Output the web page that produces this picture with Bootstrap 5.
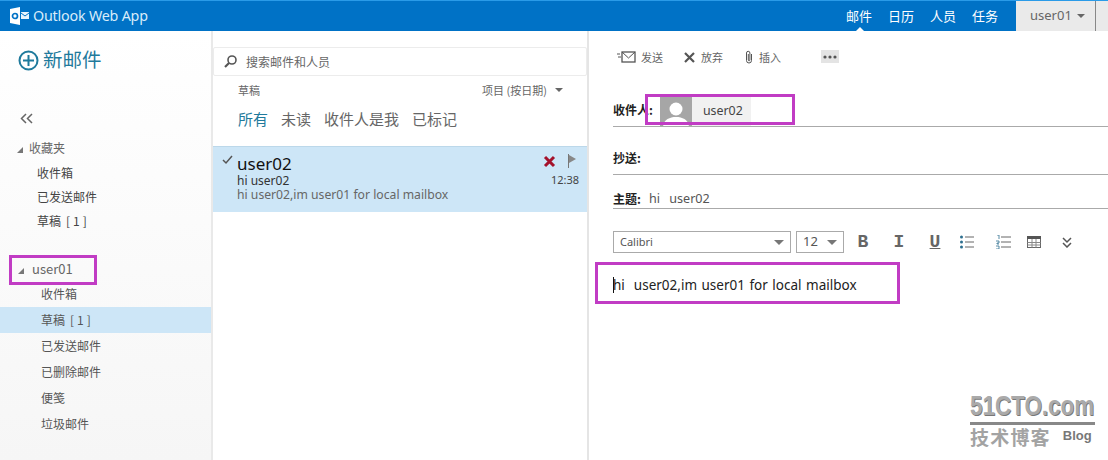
<!DOCTYPE html>
<html lang="zh"><head><meta charset="utf-8"><title>Outlook Web App</title>
<link href="https://cdn.jsdelivr.net/npm/bootstrap@5.3.0/dist/css/bootstrap.min.css" rel="stylesheet">
<style>
html,body{height:460px;overflow:hidden;background:#fff}
body{font-family:"Noto Sans","Noto Sans CJK SC",sans-serif;font-size:12px;color:#555;position:relative}
.cj{font-family:"Noto Sans CJK SC","Noto Sans",sans-serif}
.topbar{height:31px;background:#0072c6;border-top:1px solid #2a9be8;color:#fff}
.logo{margin-left:10px;flex:none}
.brand-txt{font-size:14.3px;color:#d8ecfa;margin-left:4px;letter-spacing:-.2px}
.tnav{gap:16px;font-size:13px;margin-right:18px;color:#fff;position:relative}
.tnav span{position:relative}
.tnav .on::after{content:"";position:absolute;left:9px;bottom:-6px;border:5px solid transparent;border-top:0;border-bottom-color:#fff}
.ubox{width:80px;height:30px;background:#eaeaea;color:#666;font-size:13px;padding-left:14px;border-right:1px solid #888}
.caret{display:inline-block;border:4px solid transparent;border-top-color:currentColor;border-bottom:0;margin-left:5px;vertical-align:middle}
.ustub{width:12px;background:#eaeaea;height:30px}
.shell{height:429px}
.leftp{width:213px;background:linear-gradient(#fff,#f6f6f6);flex:none;border-right:2px solid #e9e9e9}
.newm{color:#1f7a9c;font-size:19.500px;padding:3px 0 0 18px;height:56px}
.newm span{margin-top:-4px}
.coll{padding-left:20px;margin-top:24px;height:16px;line-height:12px}
.fold{font-size:12px;color:#666;height:24px;line-height:24px}
.fold1{margin-top:9px}
.fold2{margin-top:24px;font-size:13px}
.tri{display:inline-block;border-style:solid;border-width:0 0 6px 6px;border-color:transparent transparent #777 transparent;margin:0 6px 0 17px}
.fold2 .tri{margin:0 8px 0 18px}
.sub{padding-left:37px;height:24px;line-height:24px;color:#444;font-size:12px}
.sub1st{margin-top:1px}
.sub2{padding-left:41px;height:26px;line-height:26px;color:#555;font-size:12px}
.sub2.act{background:#cde6f7}
.brk{letter-spacing:3px;margin-left:5px}
.mid{width:376px;flex:none;border-right:2px solid #e5e5e5}
.search{width:374px;height:29px;margin-top:16px;border:1px solid #ececec;border-radius:2px;padding-left:9px;color:#666;font-size:12px;gap:8px}
.mhead{height:20px;padding:0 24px 0 25px;font-size:11px;color:#666;margin-top:4px;line-height:20px}
.filters{gap:13px;font-size:15px;padding-left:25px;color:#666;margin-top:1px;height:36px}
.filters .on{color:#1f7a9c}
.msg{height:66px;background:#cde6f7;margin-top:9px;position:relative;padding:7px 8px 0 24px;border-top:1px solid #bcd8ea;font-family:"Noto Sans",sans-serif}
.msg .nm{font-size:17px;line-height:20px;color:#111}
.msg .sj{font-size:12px;line-height:13px;color:#333}
.msg .pv{font-size:12.200px;line-height:16px;color:#666}
.chk{position:absolute;left:9px;top:7px}
.acts{position:absolute;right:8px;top:7px;text-align:right;line-height:1}
.acts-row{gap:11px;margin-right:2px}
.tm{color:#444;font-size:11px;margin-top:6px}
.right{flex:1;padding-left:24px}
.cmd{height:54px;padding-top:16px;font-size:11px;color:#666;align-items:flex-start}
.cmd>span{display:flex;align-items:center;height:20px}
.c1{margin-left:4px;gap:5px}
.c2{margin-left:21px;gap:6px}
.c3{margin-left:21px;gap:5px}
.cmd>.dots{background:#e4e4e4;width:18px;height:13px;margin-left:40px;margin-top:3px;justify-content:center}
.field{border-bottom:1px solid #aaa;font-weight:700;color:#222;font-size:12px}
.f1{height:42px;padding-top:16px}
.f2{height:48px;padding-top:22px}
.f3{height:34px;padding-top:15px}
.f3 em{font-style:normal;font-weight:400;color:#555;margin-left:8px;word-spacing:6px;font-size:12.600px;font-family:"Noto Sans",sans-serif}
.chip{background:#f1f1f1;height:29px;margin-left:7px;margin-top:-4px;width:91px;font-weight:400;color:#444;font-size:12.400px;gap:11px;overflow:hidden;font-family:"Noto Sans",sans-serif}
.ava{width:32px;height:29px;background:#a6a6a6;flex:none}
.fmt{margin-top:22px;height:22px;align-items:center}
.sel{border:1px solid #aaa;height:22px;padding:0 6px;font-size:11px;color:#555;font-family:"Noto Sans",sans-serif}
.sel1{width:178px}
.sel2{width:48px;font-size:13px;margin-left:5px}
.tri-d{border:5px solid transparent;border-top-color:#777;border-bottom:0;display:inline-block}
.tb{width:36px;text-align:center;color:#666;display:flex;justify-content:center}
.tf{font:700 18px "Liberation Mono",monospace}
.tb1{margin-left:1px}
.tu{text-decoration:underline}
.tb2{margin-left:-4px}
.tb3{margin-left:-5px}
.tb4{margin-left:-3px}
.body-t{font-size:13.500px;color:#222;margin-top:23px;line-height:18px;word-spacing:1px;font-family:"Noto Sans",sans-serif}
.cursor{display:inline-block;width:1px;height:16px;background:#111;vertical-align:-3px;margin-right:-1px}
.hl{position:absolute;border:3px solid #c13cc4;pointer-events:none}
.hl1{left:9px;top:255px;width:88px;height:30px}
.hl2{left:645px;top:94px;width:150px;height:31px}
.hl3{left:595px;top:262px;width:305px;height:42px}
.wm{position:absolute;left:970px;top:391px;width:130px;line-height:1}
.wm b{display:block;font:700 27px/31px "Liberation Sans",sans-serif;color:#aaa;text-shadow:1px 1px 0 #777;border-bottom:3px solid #888;width:125px;white-space:nowrap}
.wm b span{display:inline-block;transform:scaleX(.83);transform-origin:left}
.wm .cn{font:700 19px/23px "Noto Sans CJK SC",sans-serif;color:#a3a3a3;letter-spacing:1.200px}
.wm i{font:700 13px "Liberation Sans",sans-serif;font-style:normal;color:#777;margin-left:12px;vertical-align:5px}
</style></head><body>
<div class="topbar d-flex align-items-center">
 <svg class="logo" width="19" height="18" viewBox="0 0 19 18"><path d="M0 2 10 0v18L0 16z" fill="#fff"/><circle cx="5" cy="9" r="2.500" fill="none" stroke="#0072c6" stroke-width="1.700"/><path d="M11 5h8v7h-8z" fill="#e8f4fc"/><path d="M11 6l4 3 4-3" fill="none" stroke="#0072c6"/></svg>
 <span class="brand-txt">Outlook Web App</span>
 <div class="ms-auto d-flex align-items-center">
  <div class="tnav d-flex cj"><span class="on">邮件</span><span>日历</span><span>人员</span><span>任务</span></div>
  <div class="ubox d-flex align-items-center">user01<i class="caret"></i></div><div class="ustub"></div>
 </div>
</div>
<div class="shell d-flex">
 <aside class="leftp cj">
  <div class="newm d-flex align-items-center gap-1"><svg width="21" height="21" viewBox="0 0 21 21"><circle cx="10.500" cy="10.500" r="9" fill="none" stroke="#1f7a9c" stroke-width="2"/><path d="M10.500 5v11M5 10.500h11" stroke="#1f7a9c" stroke-width="2"/></svg><span>新邮件</span></div>
  <div class="coll"><svg width="13" height="11" viewBox="0 0 13 11"><path d="M6 1 1.500 5.500 6 10M12 1 7.500 5.500 12 10" fill="none" stroke="#666" stroke-width="1.500"/></svg></div>
  <div class="fold fold1"><i class="tri"></i>收藏夹</div>
  <div class="sub sub1st">收件箱</div><div class="sub">已发送邮件</div><div class="sub">草稿<span class="brk">[1]</span></div>
  <div class="fold fold2"><i class="tri"></i>user01</div>
  <div class="sub2">收件箱</div><div class="sub2 act">草稿<span class="brk">[1]</span></div><div class="sub2">已发送邮件</div><div class="sub2">已删除邮件</div><div class="sub2">便笺</div><div class="sub2">垃圾邮件</div>
 </aside>
 <main class="mid cj">
  <div class="search d-flex align-items-center"><svg width="15" height="15" viewBox="0 0 15 15"><circle cx="9" cy="6" r="4" fill="none" stroke="#555" stroke-width="1.600"/><path d="M6 9l-4 4" stroke="#555" stroke-width="2.200"/></svg><span>搜索邮件和人员</span></div>
  <div class="mhead d-flex justify-content-between"><span>草稿</span><span class="d-flex align-items-center">项目 (按日期)<i class="caret ms-2"></i></span></div>
  <div class="filters d-flex align-items-center"><span class="on">所有</span><span>未读</span><span>收件人是我</span><span>已标记</span></div>
  <div class="msg">
   <svg class="chk" width="11" height="11" viewBox="0 0 11 11"><path d="M1 6l3 3 6-7" fill="none" stroke="#555" stroke-width="1.500"/></svg>
   <div class="nm">user02</div><div class="sj">hi user02</div><div class="pv">hi user02,im user01 for local mailbox</div>
   <div class="acts"><div class="acts-row d-flex justify-content-end align-items-center"><svg width="13" height="13" viewBox="0 0 13 13"><path d="M2 2l9 9M11 2l-9 9" stroke="#a4122c" stroke-width="3"/></svg><svg width="10" height="14" viewBox="0 0 10 14"><path d="M1.500 0v14" stroke="#777"/><path d="M2 1l7 4-7 4z" fill="#888"/></svg></div><div class="tm">12:38</div></div>
  </div>
 </main>
 <section class="right cj">
  <div class="cmd d-flex">
   <span class="c1"><svg width="19" height="12" viewBox="0 0 19 12"><rect x="5" y="1" width="13" height="10" fill="none" stroke="#555" stroke-width="1.300"/><path d="M5 1l6.500 6L18 1M0 3h3M1 6h3" fill="none" stroke="#555"/></svg>发送</span>
   <span class="c2"><svg width="11" height="11" viewBox="0 0 11 11"><path d="M1 1l9 9M10 1l-9 9" stroke="#555" stroke-width="2.200"/></svg>放弃</span>
   <span class="c3"><svg width="10" height="14" viewBox="0 0 10 14"><path d="M7.500 4v6.500a2.500 2.500 0 0 1-5 0V3a1.700 1.700 0 0 1 3.400 0v7a.8.8 0 0 1-1.600 0V4" fill="none" stroke="#555"/></svg>插入</span>
   <span class="dots"><svg width="14" height="4" viewBox="0 0 14 4"><circle cx="2" cy="2" r="1.600" fill="#555"/><circle cx="7" cy="2" r="1.600" fill="#555"/><circle cx="12" cy="2" r="1.600" fill="#555"/></svg></span>
  </div>
  <div class="field f1 d-flex">收件人:<div class="chip d-flex align-items-center"><svg class="ava" viewBox="0 0 32 29"><circle cx="16" cy="12" r="6.500" fill="#fff"/><path d="M3 31c0-8 6-11 13-11s13 3 13 11z" fill="#fff"/></svg><span>user02</span></div></div>
  <div class="field f2">抄送:</div>
  <div class="field f3 d-flex">主题:<em>hi user02</em></div>
  <div class="fmt d-flex">
   <div class="sel sel1 d-flex align-items-center justify-content-between">Calibri<i class="tri-d"></i></div>
   <div class="sel sel2 d-flex align-items-center justify-content-between">12<i class="tri-d"></i></div>
   <div class="tb tf tb1">B</div>
   <div class="tb tf">I</div>
   <div class="tb tf tu">U</div>
   <div class="tb tb2"><svg width="14" height="14" viewBox="0 0 14 14"><path d="M5 2h9M5 7h9M5 12h9" stroke="#666"/><circle cx="1.500" cy="2" r="1.500" fill="#2d6f8f"/><circle cx="1.500" cy="7" r="1.500" fill="#2d6f8f"/><circle cx="1.500" cy="12" r="1.500" fill="#2d6f8f"/></svg></div>
   <div class="tb"><svg width="15" height="14" viewBox="0 0 15 14"><path d="M5 2h10M5 7h10M5 12h10" stroke="#666"/><path d="M1 0h2v4M0 6h3v2H1v1h2M0 11h3v3H0" fill="none" stroke="#2d6f8f" stroke-width=".8"/></svg></div>
   <div class="tb tb3"><svg width="14" height="12" viewBox="0 0 14 12"><rect x=".5" y=".5" width="13" height="11" fill="none" stroke="#666"/><path d="M0 1.500h14" stroke="#555" stroke-width="3"/><path d="M.5 6.500h13M.5 9h13M5 3V11.500M9 3V11.500" stroke="#888"/></svg></div>
   <div class="tb tb4"><svg width="10" height="11" viewBox="0 0 10 11"><path d="M1 1l4 4 4-4M1 6l4 4 4-4" fill="none" stroke="#555" stroke-width="1.500"/></svg></div>
  </div>
  <div class="body-t"><i class="cursor"></i>hi&nbsp; user02,im user01 for local mailbox</div>
 </section>
</div>
<div class="hl hl1"></div><div class="hl hl2"></div><div class="hl hl3"></div>
<div class="wm"><b><span>51CTO.com</span></b><span class="cn">技术博客</span><i>Blog</i></div>
<script src="https://cdn.jsdelivr.net/npm/bootstrap@5.3.0/dist/js/bootstrap.bundle.min.js"></script>
</body></html>
